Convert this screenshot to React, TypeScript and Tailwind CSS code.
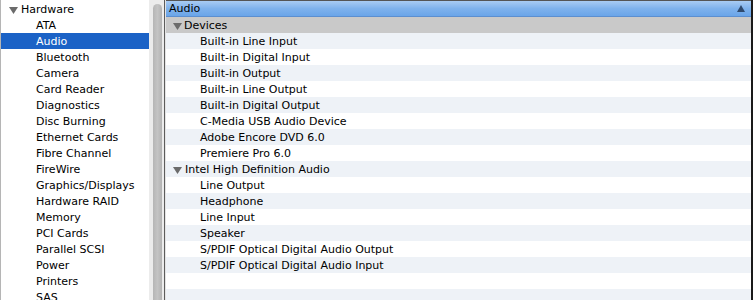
import React from "react";

const sidebar = [
  "ATA","Audio","Bluetooth","Camera","Card Reader","Diagnostics","Disc Burning","Ethernet Cards","Fibre Channel","FireWire","Graphics/Displays","Hardware RAID","Memory","PCI Cards","Parallel SCSI","Power","Printers","SAS",
];

type Row = { text: string; group?: boolean };
const rows: Row[] = [
  { text: "Built-in Line Input" },
  { text: "Built-in Digital Input" },
  { text: "Built-in Output" },
  { text: "Built-in Line Output" },
  { text: "Built-in Digital Output" },
  { text: "C-Media USB Audio Device" },
  { text: "Adobe Encore DVD 6.0" },
  { text: "Premiere Pro 6.0" },
  { text: "Intel High Definition Audio", group: true },
  { text: "Line Output" },
  { text: "Headphone" },
  { text: "Line Input" },
  { text: "Speaker" },
  { text: "S/PDIF Optical Digital Audio Output" },
  { text: "S/PDIF Optical Digital Audio Input" },
  { text: "" },
  { text: "" },
];

function Tri({ color = "#6b6b6b" }: { color?: string }) {
  return (
    <svg width="9" height="7" viewBox="0 0 9 7" className="shrink-0 mt-[6px]">
      <path d="M0 0 L9 0 L4.5 7 Z" fill={color} />
    </svg>
  );
}

export default function App() {
  return (
    <div className="w-[753px] h-[300px] overflow-hidden flex bg-white text-[11px] text-black font-['DejaVu_Sans',sans-serif]">
      <div className="w-[149px] shrink-0 flex flex-col pt-[1px] border-l border-[#b5b5b5] leading-[17px]">
        <div className="h-[16px] flex items-start gap-[3px] pl-[8px]">
          <Tri />
          <span>Hardware</span>
        </div>
        {sidebar.map((s) => (
          <div
            key={s}
            className={
              "h-[16px] shrink-0 pl-[35px] " +
              (s === "Audio" ? "bg-[#1b62c6] text-white" : "")
            }
          >
            {s}
          </div>
        ))}
      </div>
      <div className="w-[15px] shrink-0 flex bg-[#ececec] pt-[4px] pl-[4px] pr-[2px]">
        <div className="w-[9px] rounded-t-full bg-gradient-to-r from-[#b6b6b6] via-[#c4c4c4] to-[#b3b3b3]" />
      </div>
      <div className="w-[1px] shrink-0 bg-[#5c5c5c]" />
      <div className="w-[1px] shrink-0 bg-[#e4e4e4]" />
      <div className="flex-1 flex flex-col border-t border-[#555] leading-[18px]">
        <div className="h-[16px] shrink-0 flex items-start justify-between pl-[3px] pr-[6px] bg-gradient-to-b from-[#a9ccf3] via-[#7fb2ec] to-[#6aa5e9] border-b border-[#5c8fd0]">
          <span className="leading-[16px]">Audio</span>
          <svg width="8" height="7" viewBox="0 0 8 7" className="mt-[4px]">
            <path d="M4 0 L8 7 L0 7 Z" fill="#2f4a6e" />
          </svg>
        </div>
        <div className="h-[16px] shrink-0 flex items-start gap-[2px] pl-[7px] bg-[#c9c9c9]">
          <Tri />
          <span>Devices</span>
        </div>
        {rows.map((r, i) => (
          <div
            key={i}
            className={
              "h-[16px] shrink-0 flex items-start " +
              (i % 2 === 0 ? "bg-[#eef2f7] " : "bg-white ") +
              (r.group ? "pl-[7px] gap-[3px]" : "pl-[34px]")
            }
          >
            {r.group && <Tri />}
            <span>{r.text}</span>
          </div>
        ))}
      </div>
      <div className="w-[2px] shrink-0 bg-[#1a1a1a]" />
    </div>
  );
}
